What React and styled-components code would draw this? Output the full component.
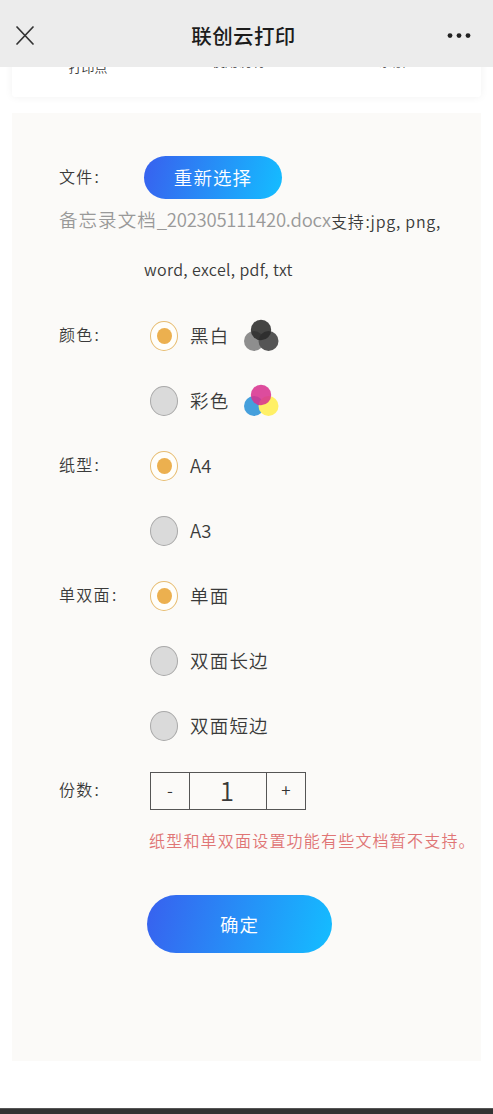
import React, { useState } from "react";
import styled, { createGlobalStyle } from "styled-components";

const Global = createGlobalStyle`
  * { box-sizing: border-box; }
  body { margin: 0; background: #fff; }
  body, button { font-family: "Noto Sans CJK SC", sans-serif; font-weight: 350; }
`;

const Page = styled.div`
  height: 1114px;
  width: 493px;
  display: flex;
  flex-direction: column;
  overflow: hidden;
  color: #3a3a3a;
`;

const Header = styled.header`
  flex: none;
  height: 67px;
  padding: 4px 22px 0 16px;
  background: #ececec;
  display: grid;
  grid-template-columns: 54px 1fr 54px;
  align-items: center;
  z-index: 1;
`;

const Title = styled.h1`
  margin: 0;
  padding-bottom: 2px;
  text-align: center;
  font-size: 20.5px;
  line-height: 30px;
  font-weight: 500;
  letter-spacing: 0.4px;
  color: #1c1c1c;
`;

const Dots = styled.svg`
  justify-self: end;
`;

const TabCard = styled.nav`
  flex: none;
  height: 46px;
  margin: -16px 12px 0;
  padding: 3px 0 0;
  display: grid;
  grid-template-columns: 152px 148px 160px;
  background: #fff;
  border-radius: 3px;
  box-shadow: 0 0 9px rgba(0, 0, 0, 0.06);
`;

const Tab = styled.span`
  font-size: 13px;
  line-height: 20px;
  text-align: center;
  margin-top: ${(p) => p.$lift || 0}px;
`;

const Panel = styled.main`
  flex: none;
  width: 469px;
  height: 948px;
  margin: 16px 12px 0;
  padding: 43px 0 0 47px;
  background: #fbfaf8;
`;

const FileRow = styled.div`
  display: grid;
  grid-template-columns: 85px 1fr;
  height: 43px;
`;

const Label = styled.span`
  font-size: 16px;
  letter-spacing: 1.3px;
  line-height: ${(p) => p.$line || 63}px;
  white-space: nowrap;
`;

const Colon = styled.span`
  margin-left: 1px;
`;

const Pill = styled.button`
  width: ${(p) => p.$w}px;
  height: ${(p) => p.$h}px;
  padding: 0 0 ${(p) => p.$drop ?? 2}px;
  border: 0;
  border-radius: 30px;
  color: #fff;
  font-size: 18.5px;
  letter-spacing: 1.1px;
  background: linear-gradient(105deg, #3763ef 3%, #15bbff 97%);
`;

const FileLine = styled.div`
  display: flex;
  height: 44px;
  white-space: nowrap;
`;

const FileName = styled.span`
  width: 272px;
  font-size: 18.5px;
  line-height: 40px;
  letter-spacing: 1.05px;
  color: #999;
`;

const FileStamp = styled.span`
  letter-spacing: -0.24px;
`;

const Formats = styled.span`
  font-size: 16px;
  line-height: ${(p) => p.$line}px;
  letter-spacing: ${(p) => p.$track}px;
`;

const FormatLine = styled.div`
  padding-left: 85px;
  height: 60px;
  white-space: nowrap;
`;

const Group = styled.section`
  display: grid;
  grid-template-columns: 91px 1fr;
  align-items: start;
  min-height: 65px;
`;

const Option = styled.div`
  height: 65px;
  display: flex;
  align-items: center;
  font-size: 18.5px;
  letter-spacing: ${(p) => (p.$latin ? 0.2 : 1.2)}px;
`;

const OptionText = styled.span`
  margin: 0 14px 0 12px;
  padding-bottom: 2px;
  line-height: 28px;
`;

const Radio = styled.span`
  width: 28px;
  height: 30px;
  flex: none;
  border: 1px solid ${(p) => (p.$on ? "#e7bd72" : "#a9a9a9")};
  border-radius: 50%;
  background: ${(p) => (p.$on ? "#fffefa" : "#dadada")};
  display: grid;
  place-items: center;
  &::after {
    content: "";
    width: 15px;
    height: 16px;
    border-radius: 50%;
    background: ${(p) => (p.$on ? "#ecb04f" : "transparent")};
  }
`;

const Stepper = styled.div`
  width: 156px;
  height: 38px;
  margin-top: 14px;
  display: grid;
  grid-template-columns: 38px 78px 38px;
  border: 1px solid #555;
`;

const Step = styled.button`
  padding: 0 0 4px;
  border: 0;
  background: transparent;
  color: #333;
  font-size: 17px;
`;

const Count = styled.output`
  border: solid #555;
  border-width: 0 1px;
  padding-right: 2px;
  text-align: center;
  font-size: 26px;
  line-height: 34px;
`;

const Notice = styled.p`
  margin: 0 0 0 90px;
  height: 60px;
  line-height: 34px;
  font-size: 16px;
  letter-spacing: 1.2px;
  color: #e07575;
  white-space: nowrap;
`;

const Confirm = styled.div`
  padding: 12px 0 0 88px;
`;

const BottomBar = styled.footer`
  flex: none;
  height: 6px;
  margin-top: 47px;
  background: #333;
  border-top: 1px solid #555;
`;

function Inks({ colors }) {
  return (
    <svg width="36" height="33" viewBox="0 0 36 33">
      <circle cx="11" cy="22" r="10" fill={colors[0]} />
      <circle cx="25.5" cy="22" r="10" fill={colors[1]} />
      <circle cx="18" cy="11" r="10.2" fill={colors[2]} fillOpacity="0.87" />
    </svg>
  );
}

const mono = ["#8e8e8e", "#555555", "#292929"];
const full = ["#459fdc", "#fff066", "#d83190"];

const groups = [
  { label: "颜色", options: [{ text: "黑白", inks: mono }, { text: "彩色", inks: full }] },
  { label: "纸型", options: [{ text: "A4", latin: true }, { text: "A3", latin: true }] },
  { label: "单双面", options: [{ text: "单面" }, { text: "双面长边" }, { text: "双面短边" }] },
];

export default function App() {
  const [picked, setPicked] = useState([0, 0, 0]);
  const [count, setCount] = useState(1);
  return (
    <Page>
      <Global />
      <Header>
        <svg width="18" height="20" viewBox="0 0 18 20" stroke="#333" strokeWidth="1.7" strokeLinecap="round">
          <path d="M1 1 17 18M17 1 1 18" />
        </svg>
        <Title>联创云打印</Title>
        <Dots width="24" height="6" viewBox="0 0 24 6" fill="#222">
          <circle cx="3" cy="2.6" r="2.4" />
          <circle cx="12" cy="2.6" r="2.4" />
          <circle cx="21" cy="2.6" r="2.4" />
        </Dots>
      </Header>
      <TabCard>
        <Tab $lift={3}>打印点</Tab>
        <Tab $lift={-3}>使用说明</Tab>
        <Tab $lift={-3}>余额</Tab>
      </TabCard>
      <Panel>
        <FileRow>
          <Label $line={40}>文件<Colon>:</Colon></Label>
          <Pill $w={138} $h={43}>重新选择</Pill>
        </FileRow>
        <FileLine>
          <FileName>备忘录文档<FileStamp>_202305111420.docx</FileStamp></FileName>
          <Formats $line={45} $track={0.75}>支持<Colon>:</Colon>jpg, png,</Formats>
        </FileLine>
        <FormatLine>
          <Formats $line={52} $track={0.35}>word, excel, pdf, txt</Formats>
        </FormatLine>
        {groups.map((g, gi) => (
          <Group key={g.label}>
            <Label>{g.label}<Colon>:</Colon></Label>
            <div>
              {g.options.map((o, oi) => (
                <Option
                  key={o.text}
                  $latin={o.latin}
                  onClick={() => setPicked(picked.map((v, i) => (i === gi ? oi : v)))}
                >
                  <Radio $on={picked[gi] === oi} />
                  <OptionText>{o.text}</OptionText>
                  {o.inks && <Inks colors={o.inks} />}
                </Option>
              ))}
            </div>
          </Group>
        ))}
        <Group>
          <Label>份数<Colon>:</Colon></Label>
          <Stepper>
            <Step onClick={() => setCount(Math.max(1, count - 1))}>-</Step>
            <Count>{count}</Count>
            <Step onClick={() => setCount(count + 1)}>+</Step>
          </Stepper>
        </Group>
        <Notice>纸型和单双面设置功能有些文档暂不支持。</Notice>
        <Confirm>
          <Pill $w={185} $h={58} $drop={0}>确定</Pill>
        </Confirm>
      </Panel>
      <BottomBar />
    </Page>
  );
}
